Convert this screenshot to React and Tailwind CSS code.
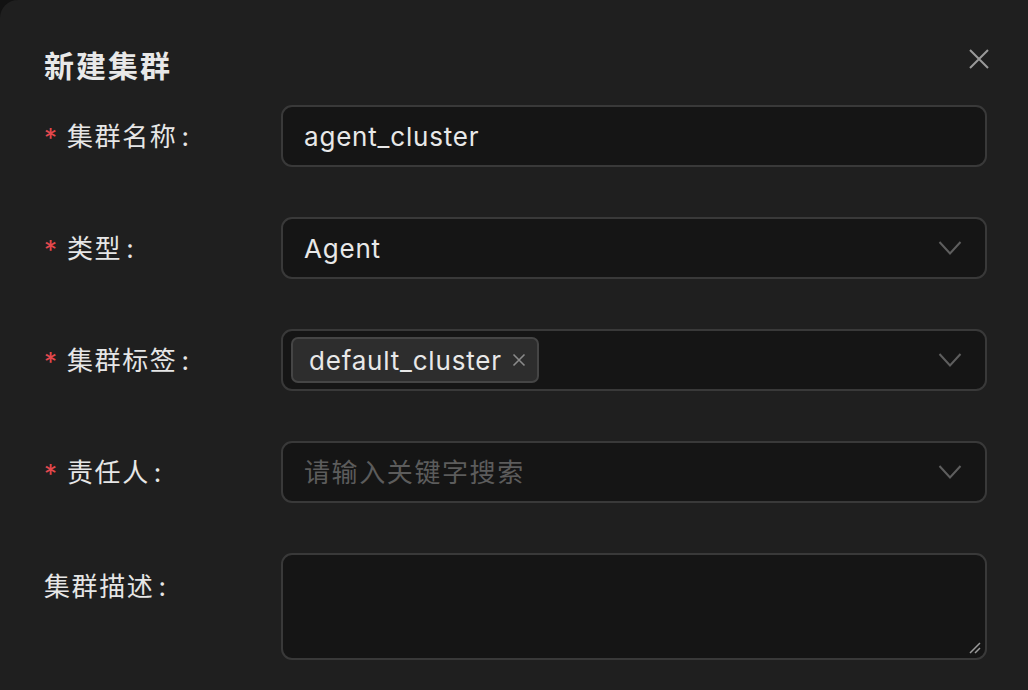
import React from "react";

const font = { fontFamily: '"Inter", "Noto Sans CJK SC", sans-serif' };

function Chevron() {
  return (
    <svg width="24" height="16" viewBox="0 0 24 16" fill="none" className="shrink-0">
      <path d="M1.5 2 L12 13.5 L22.5 2" stroke="#5e5e5e" strokeWidth="2" />
    </svg>
  );
}

function Label({ required, children }) {
  return (
    <div className="w-[237px] shrink-0 flex items-center h-[62px] text-[26px] text-[#e6e6e6]">
      {required && <span className="text-[#e5484d] mr-[7px] w-[16px] text-[26px] leading-none mt-[4px]">*</span>}
      <span className="tracking-[1.6px]">{children}</span>
      <span className="ml-[4px]">:</span>
    </div>
  );
}

export default function App() {
  return (
    <div className="w-[1028px] h-[690px] bg-[#121212] overflow-hidden" style={font}>
      <div className="w-full h-full bg-[#1f1f1f] rounded-tl-[18px] pl-[44px] pr-[41px] pt-[44px]">
        <div className="flex items-center justify-between h-[44px]">
          <div className="text-[30px] font-bold text-[#e8e8e8] tracking-[2px]">新建集群</div>
          <svg width="22" height="22" viewBox="0 0 22 22" className="mr-[-3px] mt-[-14px]">
            <path d="M2 2 L20 20 M20 2 L2 20" stroke="#9a9a9a" strokeWidth="2" />
          </svg>
        </div>
        <div className="flex flex-col gap-[50px] mt-[17px]">
          <div className="flex">
            <Label required>集群名称</Label>
            <div className="flex-1 h-[62px] rounded-[11px] border-2 border-[#393939] bg-[#151515] flex items-center px-[21px] text-[26px] tracking-[0.8px] text-[#e8e8e8]">
              agent_cluster
            </div>
          </div>
          <div className="flex">
            <Label required>类型</Label>
            <div className="flex-1 h-[62px] rounded-[11px] border-2 border-[#393939] bg-[#151515] flex items-center justify-between pl-[21px] pr-[23px] text-[26px] tracking-[0.8px] text-[#e8e8e8]">
              <span>Agent</span>
              <Chevron />
            </div>
          </div>
          <div className="flex">
            <Label required>集群标签</Label>
            <div className="flex-1 h-[62px] rounded-[11px] border-2 border-[#393939] bg-[#151515] flex items-center justify-between pl-[8px] pr-[23px] text-[26px] tracking-[0.8px] text-[#e8e8e8]">
              <div className="h-[46px] rounded-[7px] border-2 border-[#454545] bg-[#2d2d2d] flex items-center pl-[16px] pr-[11px] gap-[10px]">
                <span>default_cluster</span>
                <svg width="14" height="14" viewBox="0 0 14 14">
                  <path d="M1.5 1.5 L12.5 12.5 M12.5 1.5 L1.5 12.5" stroke="#8a8a8a" strokeWidth="1.6" />
                </svg>
              </div>
              <Chevron />
            </div>
          </div>
          <div className="flex">
            <Label required>责任人</Label>
            <div className="flex-1 h-[62px] rounded-[11px] border-2 border-[#393939] bg-[#151515] flex items-center justify-between pl-[21px] pr-[23px] text-[26px] tracking-[1.6px] text-[#5c5c5c]">
              <span>请输入关键字搜索</span>
              <Chevron />
            </div>
          </div>
          <div className="flex">
            <div className="w-[237px] shrink-0 pt-[14px] text-[26px] text-[#e6e6e6]">
              <span className="tracking-[1.6px]">集群描述</span>
              <span className="ml-[4px]">:</span>
            </div>
            <div className="flex-1 h-[107px] rounded-[11px] border-2 border-[#393939] bg-[#151515] relative">
              <svg width="14" height="14" viewBox="0 0 14 14" className="absolute right-[3px] bottom-[3px]">
                <path d="M2 12 L12 2 M7 12 L12 7" stroke="#9a9a9a" strokeWidth="1.5" />
              </svg>
            </div>
          </div>
        </div>
      </div>
    </div>
  );
}
